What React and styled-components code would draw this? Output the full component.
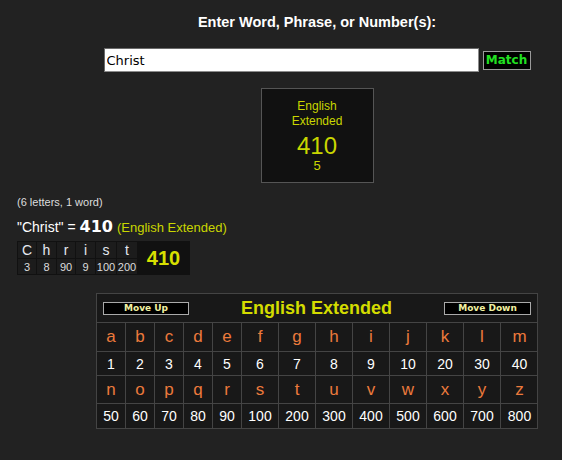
import React from "react";
import styled, { createGlobalStyle } from "styled-components";

const GlobalStyle = createGlobalStyle`
  body {
    margin: 0;
    background: #222222;
    font-family: "Liberation Sans", Arial, sans-serif;
  }
`;

const Page = styled.div`
  width: 562px;
  height: 460px;
  overflow: hidden;
  padding-top: 14px;
  box-sizing: border-box;
`;

const Column = styled.div`
  margin-left: 96px;
  width: 442px;
  display: flex;
  flex-direction: column;
  align-items: center;
`;

const Heading = styled.div`
  color: #ffffff;
  font-size: 14.5px;
  font-weight: bold;
  line-height: 16px;
`;

const SearchRow = styled.form`
  display: flex;
  align-items: center;
  gap: 4px;
  margin-top: 18px;
`;

const WordInput = styled.input`
  width: 375px;
  height: 24px;
  box-sizing: border-box;
  border: 1px solid #8c8c8c;
  border-top-color: #6a6a6a;
  border-left-color: #6a6a6a;
  background: #ffffff;
  padding: 0 2px;
  font-family: "DejaVu Sans", Tahoma, sans-serif;
  font-size: 13px;
  color: #000000;
  outline: none;
`;

const MatchButton = styled.button`
  width: 48px;
  height: 19px;
  box-sizing: border-box;
  background: #000000;
  border: 1px solid #9a9a9a;
  color: #22e022;
  font-family: "DejaVu Sans", Verdana, sans-serif;
  font-weight: bold;
  font-size: 12px;
  padding: 0;
  line-height: 16px;
`;

const ResultBox = styled.div`
  margin-top: 16px;
  width: 113px;
  height: 95px;
  box-sizing: border-box;
  border: 1px solid #555555;
  background: #111111;
  color: #c9d600;
  display: flex;
  flex-direction: column;
  align-items: center;
  padding-top: 10px;
`;

const CipherName = styled.div`
  font-size: 12px;
  line-height: 15px;
  text-align: center;
`;

const BigValue = styled.div`
  font-size: 24px;
  line-height: 26px;
  margin-top: 4px;
`;

const SmallValue = styled.div`
  font-size: 13px;
  line-height: 14px;
`;

const Summary = styled.div`
  padding-left: 17px;
  margin-top: 12px;
`;

const Counts = styled.div`
  color: #dddddd;
  font-size: 11px;
  line-height: 14px;
`;

const Equation = styled.div`
  margin-top: 8px;
  color: #ffffff;
  font-size: 14px;
  line-height: 20px;
  display: flex;
  align-items: baseline;
  gap: 4px;
`;

const Total = styled.span`
  font-family: "DejaVu Sans", Verdana, sans-serif;
  font-weight: bold;
  font-size: 16px;
`;

const CipherTag = styled.span`
  color: #c9d600;
  font-size: 13px;
`;

const Breakdown = styled.div`
  margin-top: 3px;
  display: inline-grid;
  grid-template-columns: 18px 19px 18px 19px 20px 20px 51px;
  grid-template-rows: 16px 15px;
  gap: 1px;
  background: #111111;
  border: 1px solid #111111;
`;

const BreakCell = styled.div`
  background: #1c1c1c;
  color: ${(p) => (p.$letter ? "#e4e8f0" : "#dddddd")};
  font-size: ${(p) => (p.$letter ? "14px" : "11px")};
  display: flex;
  align-items: center;
  justify-content: center;
`;

const BreakTotal = styled.div`
  grid-column: 7;
  grid-row: 1 / span 2;
  background: #111111;
  color: #d8e000;
  font-weight: bold;
  font-size: 20px;
  display: flex;
  align-items: center;
  justify-content: center;
`;

const CipherTable = styled.div`
  margin-top: 18px;
  margin-left: 96px;
  width: 442px;
  box-sizing: border-box;
  border: 1px solid #444444;
  background: #181818;
`;

const TableHead = styled.div`
  height: 28px;
  display: flex;
  align-items: center;
  justify-content: space-between;
  padding: 0 6px;
  border-bottom: 1px solid #444444;
`;

const TableTitle = styled.div`
  color: #d4dc00;
  font-size: 18px;
  font-weight: bold;
`;

const MoveButton = styled.button`
  width: ${(p) => p.$w}px;
  height: 13px;
  box-sizing: border-box;
  background: #000000;
  border: 1px solid #aaaaaa;
  color: #f0f0a0;
  font-family: "DejaVu Sans", Verdana, sans-serif;
  font-weight: bold;
  font-size: 9px;
  line-height: 11px;
  padding: 0;
`;

const Grid = styled.div`
  display: grid;
  grid-template-columns: repeat(5, 29px) repeat(8, 37px);
  grid-template-rows: 29px 24px 28px 24px;
`;

const GridCell = styled.div`
  display: flex;
  align-items: center;
  justify-content: center;
  border-right: ${(p) => (p.$last ? "none" : "1px solid #444444")};
  border-bottom: ${(p) => (p.$bottom ? "none" : "1px solid #444444")};
  color: ${(p) => (p.$letter ? "#ec7a3c" : "#ffffff")};
  font-size: ${(p) => (p.$letter ? "17px" : "14px")};
`;

const word = [
  ["C", 3],
  ["h", 8],
  ["r", 90],
  ["i", 9],
  ["s", 100],
  ["t", 200],
];

const values = [
  1, 2, 3, 4, 5, 6, 7, 8, 9, 10, 20, 30, 40, 50, 60, 70, 80, 90, 100, 200, 300,
  400, 500, 600, 700, 800,
];
const alphabet = "abcdefghijklmnopqrstuvwxyz".split("");

const App = () => {
  const rows = [
    { letter: true, items: alphabet.slice(0, 13) },
    { letter: false, items: values.slice(0, 13) },
    { letter: true, items: alphabet.slice(13) },
    { letter: false, items: values.slice(13) },
  ];

  return (
    <Page>
      <GlobalStyle />
      <Column>
        <Heading>Enter Word, Phrase, or Number(s):</Heading>
        <SearchRow onSubmit={(e) => e.preventDefault()}>
          <WordInput defaultValue="Christ" />
          <MatchButton type="submit">Match</MatchButton>
        </SearchRow>
        <ResultBox>
          <CipherName>
            English
            <br />
            Extended
          </CipherName>
          <BigValue>410</BigValue>
          <SmallValue>5</SmallValue>
        </ResultBox>
      </Column>

      <Summary>
        <Counts>(6 letters, 1 word)</Counts>
        <Equation>
          <span>"Christ" =</span>
          <Total>410</Total>
          <CipherTag>(English Extended)</CipherTag>
        </Equation>
        <Breakdown>
          {word.map(([l]) => (
            <BreakCell $letter key={"l" + l}>
              {l}
            </BreakCell>
          ))}
          <BreakTotal>410</BreakTotal>
          {word.map(([l, v]) => (
            <BreakCell key={"v" + l}>{v}</BreakCell>
          ))}
        </Breakdown>
      </Summary>

      <CipherTable>
        <TableHead>
          <MoveButton $w={86}>Move Up</MoveButton>
          <TableTitle>English Extended</TableTitle>
          <MoveButton $w={87}>Move Down</MoveButton>
        </TableHead>
        <Grid>
          {rows.map((row, ri) =>
            row.items.map((item, ci) => (
              <GridCell
                key={ri + "-" + ci}
                $letter={row.letter}
                $last={ci === 12}
                $bottom={ri === 3}
              >
                {item}
              </GridCell>
            ))
          )}
        </Grid>
      </CipherTable>
    </Page>
  );
};

export default App;
